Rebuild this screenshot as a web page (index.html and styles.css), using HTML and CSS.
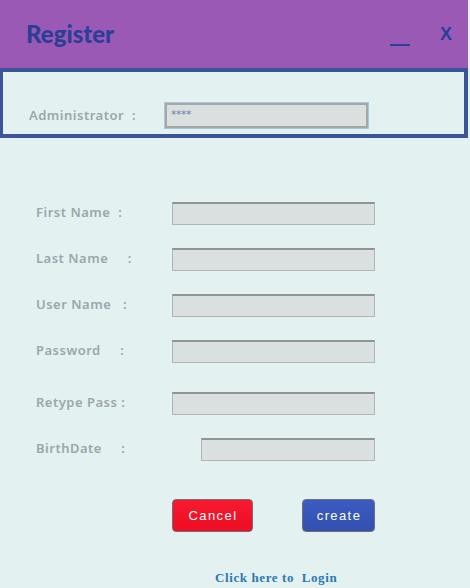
FILE: index.html
```html
<!DOCTYPE html>
<html>
<head>
<meta charset="utf-8">
<link rel="stylesheet" href="styles.css">
</head>
<body>
<div class="window">
  <header class="titlebar">
    <h1 class="title">Register</h1>
    <div class="controls">
      <span class="minimize"></span>
      <span class="close">X</span>
    </div>
  </header>
  <section class="admin">
    <label class="label admin-label">Administrator&nbsp; :</label>
    <div class="admin-input">****</div>
  </section>
  <section class="form">
    <div class="row"><span class="label">First Name&nbsp; :</span><span class="field"></span></div>
    <div class="row"><span class="label">Last Name&nbsp;&nbsp;&nbsp;&nbsp; :</span><span class="field"></span></div>
    <div class="row"><span class="label">User Name&nbsp;&nbsp; :</span><span class="field"></span></div>
    <div class="row"><span class="label">Password&nbsp;&nbsp;&nbsp;&nbsp; :</span><span class="field"></span></div>
    <div class="row gap-before"><span class="label">Retype Pass :</span><span class="field"></span></div>
    <div class="row"><span class="label">BirthDate&nbsp;&nbsp;&nbsp;&nbsp; :</span><span class="field short"></span></div>
    <div class="buttons">
      <button class="btn cancel">Cancel</button>
      <button class="btn create">create</button>
    </div>
    <div class="login">Click here to&nbsp; Login</div>
  </section>
</div>
</body>
</html>
```
FILE: styles.css
```css
html, body {
  margin: 0;
  padding: 0;
  background: #e4f1f1;
}
body {
  width: 470px;
  height: 588px;
  overflow: hidden;
}
.window {
  width: 468px;
}
.titlebar {
  height: 68px;
  background: #9b59b6;
  display: flex;
  align-items: center;
  justify-content: space-between;
  padding: 0 0 0 26px;
  box-sizing: border-box;
}
.title {
  margin: 0;
  font-family: Lato, "Liberation Sans", sans-serif;
  font-weight: 900;
  font-size: 24px;
  color: #2b3f96;
  margin-top: -2px;
}
.controls {
  display: flex;
  align-items: flex-start;
  height: 30px;
  margin-right: 16px;
}
.minimize {
  display: block;
  width: 20px;
  height: 0;
  border-bottom: 2px solid #2b3f96;
  margin-top: 25px;
  margin-right: 30px;
}
.close {
  font-family: "Liberation Sans", Arial, sans-serif;
  font-weight: 700;
  font-size: 18px;
  color: #2b3f96;
  line-height: 18px;
  margin-top: 6px;
}
.admin {
  height: 70px;
  box-sizing: border-box;
  border: 4px solid #3b5498;
  border-left-width: 3px;
  display: flex;
  align-items: flex-end;
  padding: 0 0 6px 26px;
}
.label {
  font-family: "Noto Sans", sans-serif;
  font-weight: 600;
  font-size: 13px;
  letter-spacing: 0.5px;
  color: #9ba7a9;
  white-space: pre;
  margin-top: -3px;
}
.admin-label {
  width: 136px;
  line-height: 25px;
  margin-top: 0;
}
.admin-input {
  width: 203px;
  height: 25px;
  box-sizing: border-box;
  background: #dadfe0;
  border: 2px solid #a6a8a6;
  box-shadow: 0 0 0 1px #a6c6e2;
  font-family: "DejaVu Sans", sans-serif;
  font-size: 11px;
  color: #7483a6;
  line-height: 19px;
  padding-left: 4px;
  letter-spacing: -0.5px;
}
.form {
  padding: 64px 0 0 36px;
  display: flex;
  flex-direction: column;
  gap: 23px;
}
.row {
  display: flex;
  align-items: center;
  height: 23px;
}
.row .label {
  width: 136px;
}
.gap-before {
  margin-top: 6px;
}
.field {
  display: block;
  width: 203px;
  height: 23px;
  box-sizing: border-box;
  background: #dadfe0;
  border: 1px solid #b0b5b5;
  border-top: 2px solid #8f9595;
}
.field.short {
  width: 174px;
  margin-left: 29px;
}
.buttons {
  display: flex;
  justify-content: space-between;
  width: 203px;
  margin-left: 136px;
  margin-top: 15px;
}
.btn {
  height: 33px;
  box-sizing: border-box;
  border: 1px solid #6e6e78;
  border-radius: 4px;
  color: #fff;
  font-family: "Liberation Sans", Arial, sans-serif;
  font-size: 13px;
  letter-spacing: 1.4px;
  padding: 0 0 0 1px;
  margin: 0;
}
.cancel {
  width: 81px;
  background: linear-gradient(#f81a30, #ee0d22);
}
.create {
  width: 73px;
  background: linear-gradient(#3c5cc4, #3350b0);
}
.login {
  margin-top: 15px;
  margin-left: 179px;
  font-family: "Liberation Serif", "DejaVu Serif", serif;
  font-weight: 700;
  font-size: 13px;
  color: #2a7ab3;
  letter-spacing: 0.6px;
}
```
